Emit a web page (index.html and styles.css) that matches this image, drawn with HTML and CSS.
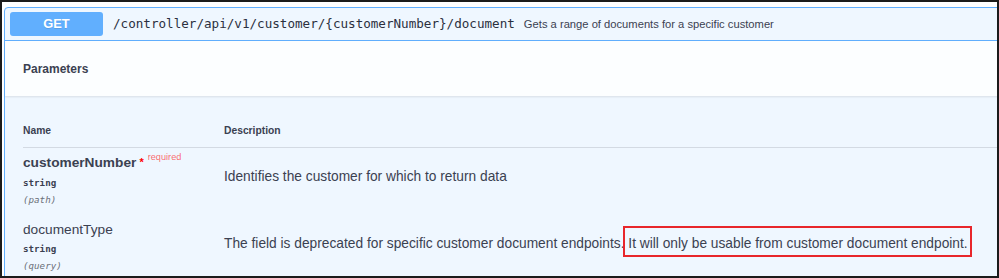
FILE: index.html
```html
<!DOCTYPE html>
<html lang="en">
<head>
    <meta charset="UTF-8">
    <meta name="viewport" content="width=device-width, initial-scale=1.0">
    <title>Swagger - customer documents</title>
    <link rel="stylesheet" href="styles.css">
</head>
<body>
    <div class="frame">
        <div class="opblock">
            <div class="summary">
                <span class="method">GET</span>
                <span class="path">/controller/api/v1/customer/{customerNumber}/document</span>
                <span class="summary-desc">Gets a range of documents for a specific customer</span>
            </div>
            <div class="section-header">
                <h4>Parameters</h4>
            </div>
            <div class="table-container">
                <div class="row head">
                    <div class="col-name">Name</div>
                    <div class="col-desc">Description</div>
                </div>
                <div class="row">
                    <div class="col-name">
                        <div class="param-name required">customerNumber<span class="star">&nbsp;*</span><span class="req">required</span></div>
                        <div class="param-type">string</div>
                        <div class="param-in">(path)</div>
                    </div>
                    <div class="col-desc">
                        <p>Identifies the customer for which to return data</p>
                    </div>
                </div>
                <div class="row">
                    <div class="col-name">
                        <div class="param-name">documentType</div>
                        <div class="param-type">string</div>
                        <div class="param-in">(query)</div>
                    </div>
                    <div class="col-desc">
                        <p>The field is deprecated for specific customer document endpoints. <span class="highlight">It will only be usable from customer document endpoint.</span></p>
                    </div>
                </div>
            </div>
        </div>
    </div>
</body>
</html>
```
FILE: styles.css
```css
body {
    margin: 0;
    padding: 0;
    background: #fff;
    font-family: "Liberation Sans", Arial, sans-serif;
    color: #3b4151;
}
.frame {
    width: 999px;
    height: 278px;
    box-sizing: border-box;
    border: 2px solid #1b1b1b;
    padding: 5px 0 0 2px;
    overflow: hidden;
    background: #fff;
}
.opblock {
    width: 1010px;
    border: 1px solid #61affe;
    border-radius: 4px;
    background: #eff7ff;
}
.summary {
    display: flex;
    align-items: center;
    height: 33px;
    box-sizing: border-box;
    padding: 4px 5px 5px 5px;
    border-bottom: 1px solid #61affe;
}
.method {
    width: 93px;
    height: 24px;
    line-height: 24px;
    text-align: center;
    background: #61affe;
    color: #fff;
    font-weight: bold;
    font-size: 12.8px;
    border-radius: 3px;
    text-shadow: 0 1px 0 rgba(0, 0, 0, 0.1);
}
.path {
    margin-left: 10px;
    font-family: "DejaVu Sans Mono", "Liberation Mono", monospace;
    font-size: 12.6px;
    color: #2b3040;
}
.summary-desc {
    margin-left: 9px;
    font-size: 11.2px;
    color: #3b4151;
}
.section-header {
    height: 55px;
    display: flex;
    align-items: center;
    padding-left: 18px;
    background: rgba(255, 255, 255, 0.8);
    box-shadow: 0 1px 2px rgba(0, 0, 0, 0.1);
}
.section-header h4 {
    margin: 0;
    font-size: 12px;
    font-weight: bold;
    padding-top: 1px;
}
.table-container {
    padding: 0 0 0 18px;
}
.row {
    display: flex;
}
.row.head {
    padding: 29px 0 10px;
    border-bottom: 1px solid #d3dae3;
    font-size: 10.3px;
    font-weight: bold;
    line-height: 12px;
}
.col-name {
    width: 201px;
    flex-shrink: 0;
}
.col-desc {
    flex: 1;
}
.row:not(.head) .col-name {
    padding: 7px 0 9px;
}
.row:not(.head) .col-desc {
    padding-top: 21px;
}
.col-desc p {
    margin: 0;
    font-size: 13.75px;
    line-height: 16px;
}
.param-name {
    font-size: 13.7px;
    line-height: 16px;
}
.param-name.required {
    font-weight: bold;
}
.star {
    color: #ff0000;
    font-size: 11px;
    position: relative;
    top: -1px;
}
.req {
    font-size: 9.2px;
    font-weight: normal;
    color: rgba(255, 0, 0, 0.6);
    position: relative;
    top: -7px;
    padding-left: 4px;
}
.param-type {
    margin-top: 5px;
    font-family: "DejaVu Sans Mono", "Liberation Mono", monospace;
    font-size: 9.2px;
    font-weight: bold;
    line-height: 12px;
}
.param-in {
    margin-top: 5px;
    font-family: "DejaVu Sans Mono", "Liberation Mono", monospace;
    font-size: 9.2px;
    font-style: italic;
    line-height: 12px;
    color: #6b6f78;
}
.highlight {
    position: relative;
}
.highlight::after {
    content: "";
    position: absolute;
    left: -5px;
    right: -4px;
    top: -10px;
    bottom: -6px;
    border: 2px solid #e8262b;
}
```
